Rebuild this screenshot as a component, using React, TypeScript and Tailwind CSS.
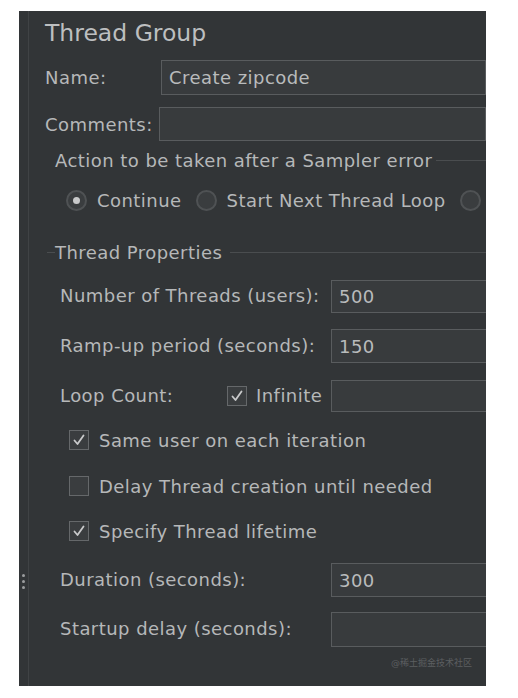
import type { ReactNode } from 'react';

const font = { fontFamily: '"DejaVu Sans", "Noto Sans CJK SC", sans-serif' };

function Field({ value, className = '' }: { value?: string; className?: string }) {
  return (
    <div className={`h-full flex-1 min-w-[200px] border border-[#595c5e] bg-[#383b3d] pl-[7px] flex items-center text-[#b9bbbc] ${className}`}>
      {value}
    </div>
  );
}

function Check({ checked }: { checked: boolean }) {
  return (
    <span className="w-[20px] h-[20px] shrink-0 border border-[#65686a] bg-[#3a3d3f] flex items-center justify-center">
      {checked && (
        <svg width="14" height="14" viewBox="0 0 14 14" fill="none">
          <path d="M2.5 7.5 L5.5 11 L11.5 2.5" stroke="#c9cacb" strokeWidth="1.8" strokeLinecap="round" strokeLinejoin="round" />
        </svg>
      )}
    </span>
  );
}

function Radio({ selected }: { selected: boolean }) {
  return (
    <span className="w-[21px] h-[21px] shrink-0 rounded-full border-2 border-[#4f5254] bg-[#3a3d3f] flex items-center justify-center">
      {selected && <span className="w-[7px] h-[7px] rounded-full bg-[#c8c9ca]" />}
    </span>
  );
}

function CheckRow({ checked, label, className = '' }: { checked: boolean; label: string; className?: string }) {
  return (
    <div className={`h-[30px] flex items-center pl-[40px] gap-[10px] ${className}`}>
      <Check checked={checked} />
      <span>{label}</span>
    </div>
  );
}

function PropRow({ label, value, className = '' }: { label: ReactNode; value?: string; className?: string }) {
  return (
    <div className={`flex items-center ${className}`}>
      <div className="w-[302px] pl-[31px] pb-[2px] shrink-0 whitespace-nowrap">{label}</div>
      <Field value={value} />
    </div>
  );
}

export default function App() {
  return (
    <div className="w-[518px] h-[698px] bg-white pt-[11px] pl-[19px]" style={font}>
      <div className="w-[467px] h-[675px] bg-[#323537] flex overflow-hidden text-[18px] tracking-[0.45px] text-[#b6b8b9]">
        <div className="w-[10px] shrink-0 border-r border-[#404345] flex flex-col items-center pt-[563px] gap-[3px]">
          <span className="w-[3px] h-[3px] rounded-full bg-[#9b9d9e]" />
          <span className="w-[3px] h-[3px] rounded-full bg-[#9b9d9e]" />
          <span className="w-[3px] h-[3px] rounded-full bg-[#9b9d9e]" />
        </div>
        <div className="flex-1 flex flex-col min-w-0">
          <div className="h-[45px] flex items-center pl-[16px] text-[23.5px] tracking-normal text-[#bdbfc0]">Thread Group</div>

          <div className="h-[35px] mt-[4px] flex items-center">
            <div className="w-[132px] pl-[16px] shrink-0">Name:</div>
            <Field value="Create zipcode" />
          </div>

          <div className="h-[34px] mt-[12px] flex items-center">
            <div className="w-[130px] pl-[16px] shrink-0">Comments:</div>
            <Field />
          </div>

          <div className="h-[30px] mt-[4px] flex items-center pl-[26px]">
            <span className="whitespace-nowrap">Action to be taken after a Sampler error</span>
            <span className="flex-1 h-px bg-[#4a4d4f] ml-[4px]" />
          </div>

          <div className="h-[30px] mt-[10px] flex items-center pl-[37px] whitespace-nowrap">
            <Radio selected />
            <span className="ml-[10px]">Continue</span>
            <span className="ml-[14px]"><Radio selected={false} /></span>
            <span className="ml-[10px]">Start Next Thread Loop</span>
            <span className="ml-[14px]"><Radio selected={false} /></span>
          </div>

          <div className="h-[30px] mt-[22px] flex items-center">
            <span className="w-[8px] h-px bg-[#4a4d4f] ml-[18px]" />
            <span className="whitespace-nowrap">Thread Properties</span>
            <span className="flex-1 h-px bg-[#4a4d4f] ml-[8px]" />
          </div>

          <PropRow label="Number of Threads (users):" value="500" className="h-[33px] mt-[13px]" />
          <PropRow label="Ramp-up period (seconds):" value="150" className="h-[34px] mt-[16px]" />

          <div className="h-[32px] mt-[17px] flex items-center">
            <div className="w-[198px] pl-[31px] pb-[2px] shrink-0">Loop Count:</div>
            <Check checked />
            <span className="ml-[9px] pb-[2px] w-[75px] shrink-0">Infinite</span>
            <Field />
          </div>

          <CheckRow checked label="Same user on each iteration" className="mt-[13px]" />
          <CheckRow checked={false} label="Delay Thread creation until needed" className="mt-[16px]" />
          <CheckRow checked label="Specify Thread lifetime" className="mt-[15px]" />

          <PropRow label="Duration (seconds):" value="300" className="h-[34px] mt-[17px]" />
          <PropRow label="Startup delay (seconds):" className="h-[35px] mt-[15px]" />

          <div className="mt-[10px] pr-[14px] text-right text-[9px] tracking-normal text-[#5c5f61]">@稀土掘金技术社区</div>
        </div>
      </div>
    </div>
  );
}
